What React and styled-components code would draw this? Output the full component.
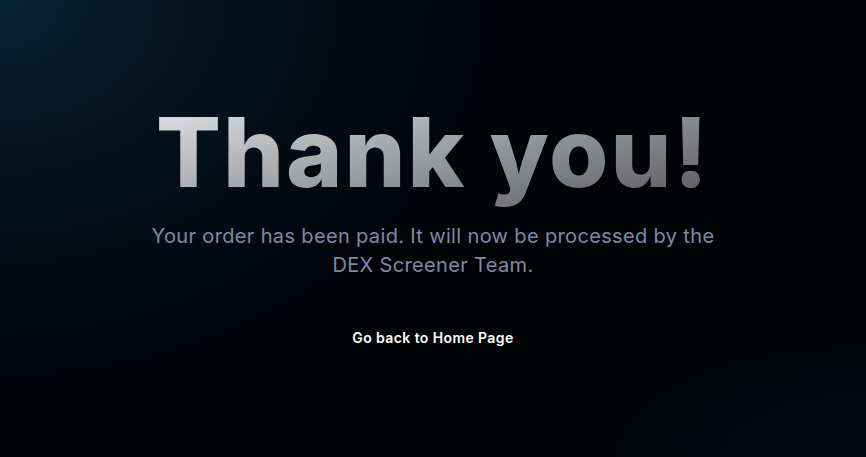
import React from 'react';
import styled, { createGlobalStyle } from 'styled-components';

const GlobalStyle = createGlobalStyle`
  html, body {
    margin: 0;
    padding: 0;
    background: #020205;
  }
  * {
    box-sizing: border-box;
  }
`;

const Page = styled.main`
  min-height: 457px;
  display: flex;
  flex-direction: column;
  align-items: center;
  padding-top: 94px;
  background:
    radial-gradient(ellipse 60% 50% at 100% 100%, rgba(12, 16, 24, 0.45), rgba(0, 0, 0, 0) 70%),
    radial-gradient(ellipse 75% 110% at 0% 0%, #062134 0%, #03101b 40%, #020307 80%);
  font-family: Inter, 'Noto Sans', sans-serif;
  text-align: center;
`;

const Title = styled.h1`
  margin: 0;
  font-size: 96px;
  font-weight: 800;
  line-height: 116px;
  letter-spacing: 2px;
  background: linear-gradient(165deg, #d6d9dd 10%, #9c9ea1 50%, #5c5c5e 95%);
  -webkit-background-clip: text;
  background-clip: text;
  color: transparent;
`;

const Message = styled.p`
  margin: 12px 0 0;
  max-width: 590px;
  font-size: 20px;
  line-height: 29px;
  font-weight: 400;
  letter-spacing: 0.35px;
  color: #7d8ba6;
`;

const HomeLink = styled.a`
  margin-top: 49px;
  font-size: 14px;
  font-weight: 600;
  letter-spacing: 0.4px;
  color: #ffffff;
  text-decoration: none;
  cursor: pointer;
`;

export default function App() {
  return (
    <>
      <GlobalStyle />
      <Page>
        <Title>Thank you!</Title>
        <Message>
          Your order has been paid. It will now be processed by the DEX Screener Team.
        </Message>
        <HomeLink href="#">Go back to Home Page</HomeLink>
      </Page>
    </>
  );
}
